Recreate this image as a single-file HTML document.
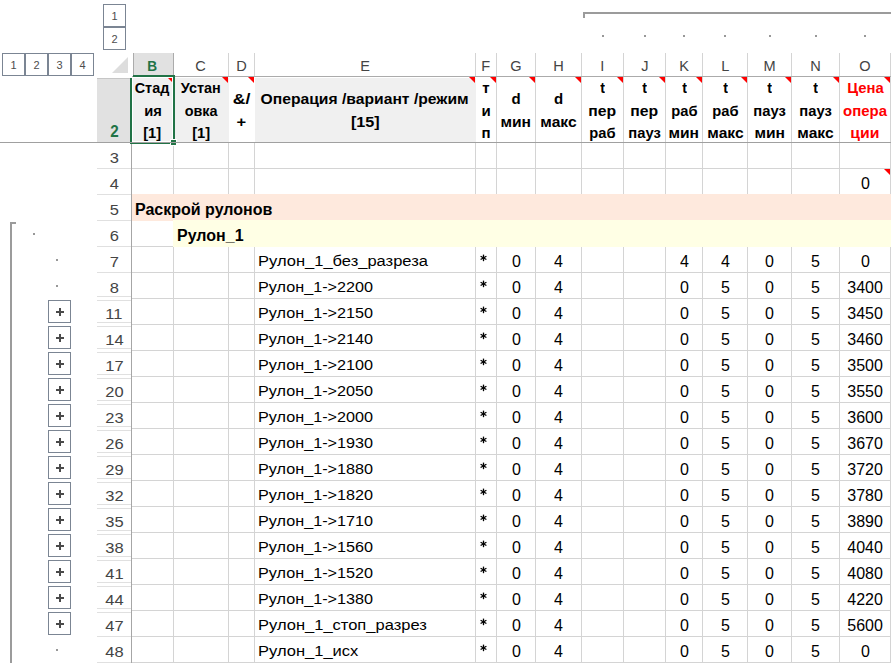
<!DOCTYPE html>
<html><head><meta charset="utf-8"><title>sheet</title>
<style>
html,body{margin:0;padding:0;background:#fff;}
body{width:891px;height:663px;position:relative;overflow:hidden;font-family:"Liberation Sans",sans-serif;}
div,span{position:absolute;box-sizing:border-box;}
.lb{width:23px;height:23px;border:1px solid #7b8593;background:#fff;color:#4d4d4d;font-size:11px;line-height:23px;text-align:center;}
.pb{width:23px;height:23px;border:1px solid #7b8593;background:#fff;left:48px;}
.pb i{position:absolute;background:#4a4a4a;display:block;}
.pb i.h{left:7px;top:10px;width:8px;height:2px;}
.pb i.v{left:10px;top:7px;width:2px;height:8px;}
.dot{width:2px;height:2px;background:#989898;}
.ch{top:53px;height:22px;line-height:25.9px;text-align:center;color:#444;font-size:15.5px;}
.ch b{display:inline-block;font-weight:inherit;transform:scaleX(0.94);}
.rh{left:97px;width:34px;text-align:center;color:#444;font-size:15.25px;height:25px;line-height:29.5px;}
.rh b{display:inline-block;font-weight:inherit;transform:scaleX(1.08);}
.vl{width:1px;background:#d4d4d4;}
.hl{height:1px;background:#d4d4d4;}
.c{height:25px;line-height:28px;font-size:15.5px;color:#000;white-space:nowrap;}
.c b,.c u,.hd b{display:inline-block;font-weight:inherit;text-decoration:none;}
.c u{transform:scaleX(1.065);transform-origin:0 50%;}
.c u.ar{transform:scaleX(1.045);}
.c u.bb{transform:scaleX(1.0);font-size:16px;position:relative;top:0.5px;}
.c.n{font-size:16.25px;line-height:28.5px;padding-left:1px;}
.c b{transform:scaleX(0.985);transform-origin:50% 50%;}
.c.st{font-size:19.5px;line-height:31.5px;}
.c.st u{transform:none;}
.hd b{transform:scaleX(0.96);transform-origin:50% 50%;}
.n{text-align:center;}
.hd{top:77px;height:65px;font-weight:bold;font-size:15px;color:#000;text-align:center;line-height:22.5px;white-space:nowrap;}
.tri{width:0;height:0;border-top:6px solid #ff0000;border-left:6px solid transparent;}
</style></head><body>

<div class="lb" style="left:103px;top:4px">1</div><div class="lb" style="left:103px;top:27px">2</div>
<div class="lb" style="left:2px;top:53px">1</div>
<div class="lb" style="left:25px;top:53px">2</div>
<div class="lb" style="left:48px;top:53px">3</div>
<div class="lb" style="left:71px;top:53px">4</div>
<div style="left:583px;top:12px;width:308px;height:2px;background:#9b9b9b"></div>
<div style="left:583px;top:12px;width:2px;height:6px;background:#9b9b9b"></div>
<div class="dot" style="left:602px;top:35px"></div>
<div class="dot" style="left:644px;top:35px"></div>
<div class="dot" style="left:683px;top:35px"></div>
<div class="dot" style="left:724px;top:35px"></div>
<div class="dot" style="left:769px;top:35px"></div>
<div class="dot" style="left:815px;top:35px"></div>
<div class="dot" style="left:864px;top:35px"></div>
<div style="left:10px;top:222px;width:2px;height:441px;background:#9b9b9b"></div>
<div style="left:10px;top:222px;width:6px;height:2px;background:#9b9b9b"></div>
<div class="dot" style="left:33px;top:233px"></div>
<div class="dot" style="left:56px;top:259px"></div>
<div class="dot" style="left:56px;top:285px"></div>
<div class="dot" style="left:56px;top:649px"></div>
<div class="pb" style="top:300px"><i class="h"></i><i class="v"></i></div>
<div class="pb" style="top:326px"><i class="h"></i><i class="v"></i></div>
<div class="pb" style="top:352px"><i class="h"></i><i class="v"></i></div>
<div class="pb" style="top:378px"><i class="h"></i><i class="v"></i></div>
<div class="pb" style="top:404px"><i class="h"></i><i class="v"></i></div>
<div class="pb" style="top:430px"><i class="h"></i><i class="v"></i></div>
<div class="pb" style="top:456px"><i class="h"></i><i class="v"></i></div>
<div class="pb" style="top:482px"><i class="h"></i><i class="v"></i></div>
<div class="pb" style="top:508px"><i class="h"></i><i class="v"></i></div>
<div class="pb" style="top:534px"><i class="h"></i><i class="v"></i></div>
<div class="pb" style="top:560px"><i class="h"></i><i class="v"></i></div>
<div class="pb" style="top:586px"><i class="h"></i><i class="v"></i></div>
<div class="pb" style="top:612px"><i class="h"></i><i class="v"></i></div>
<svg style="position:absolute;left:112px;top:57px" width="17" height="17"><polygon points="16,0 16,16 0,16" fill="#dddddd"/></svg>
<div style="left:134px;top:53px;width:40px;height:22px;background:#e1e1e1"></div>
<div class="ch" style="left:132px;width:41px;color:#217346;font-weight:bold;font-size:14.5px;line-height:26.5px;"><b>B</b></div>
<div class="ch" style="left:174px;width:54px;"><b>C</b></div>
<div class="ch" style="left:229px;width:25px;"><b>D</b></div>
<div class="ch" style="left:255px;width:220px;"><b>E</b></div>
<div class="ch" style="left:476px;width:20px;"><b>F</b></div>
<div class="ch" style="left:497px;width:38px;"><b>G</b></div>
<div class="ch" style="left:536px;width:45px;"><b>H</b></div>
<div class="ch" style="left:582px;width:41px;"><b>I</b></div>
<div class="ch" style="left:624px;width:41px;"><b>J</b></div>
<div class="ch" style="left:666px;width:36px;"><b>K</b></div>
<div class="ch" style="left:703px;width:44px;"><b>L</b></div>
<div class="ch" style="left:748px;width:43px;"><b>M</b></div>
<div class="ch" style="left:792px;width:47px;"><b>N</b></div>
<div class="ch" style="left:840px;width:50px;"><b>O</b></div>
<div class="vl" style="left:133px;top:53px;height:23px;background:#ababab"></div>
<div class="vl" style="left:173px;top:53px;height:23px;background:#ababab"></div>
<div class="vl" style="left:228px;top:53px;height:23px;background:#d4d4d4"></div>
<div class="vl" style="left:254px;top:53px;height:23px;background:#d4d4d4"></div>
<div class="vl" style="left:475px;top:53px;height:23px;background:#d4d4d4"></div>
<div class="vl" style="left:496px;top:53px;height:23px;background:#d4d4d4"></div>
<div class="vl" style="left:535px;top:53px;height:23px;background:#d4d4d4"></div>
<div class="vl" style="left:581px;top:53px;height:23px;background:#d4d4d4"></div>
<div class="vl" style="left:623px;top:53px;height:23px;background:#d4d4d4"></div>
<div class="vl" style="left:665px;top:53px;height:23px;background:#d4d4d4"></div>
<div class="vl" style="left:702px;top:53px;height:23px;background:#d4d4d4"></div>
<div class="vl" style="left:747px;top:53px;height:23px;background:#d4d4d4"></div>
<div class="vl" style="left:791px;top:53px;height:23px;background:#d4d4d4"></div>
<div class="vl" style="left:839px;top:53px;height:23px;background:#d4d4d4"></div>
<div class="vl" style="left:890px;top:53px;height:23px;background:#d4d4d4"></div>
<div class="hl" style="left:132px;top:76px;width:759px;background:#ababab"></div>
<div style="left:97px;top:79px;width:33px;height:63px;background:#e1e1e1"></div>
<div style="left:97px;top:78px;width:33px;height:1px;background:#c6c6c6"></div>
<div class="rh" style="top:117px;color:#217346;font-weight:bold;font-size:15.7px;line-height:29.2px;"><b style="transform:scaleX(0.97)">2</b></div>
<div style="left:133px;top:78px;width:96px;height:64px;background:#f0f0f0"></div>
<div style="left:255px;top:78px;width:221px;height:64px;background:#f0f0f0"></div>
<div class="vl" style="left:496px;top:77px;height:65px"></div>
<div class="vl" style="left:535px;top:77px;height:65px"></div>
<div class="vl" style="left:581px;top:77px;height:65px"></div>
<div class="vl" style="left:623px;top:77px;height:65px"></div>
<div class="vl" style="left:665px;top:77px;height:65px"></div>
<div class="vl" style="left:702px;top:77px;height:65px"></div>
<div class="vl" style="left:747px;top:77px;height:65px"></div>
<div class="vl" style="left:791px;top:77px;height:65px"></div>
<div class="vl" style="left:839px;top:77px;height:65px"></div>
<div class="vl" style="left:890px;top:77px;height:65px"></div>
<div class="vl" style="left:131px;top:143px;height:520px;background:#a6a6a6"></div>
<div class="vl" style="left:173px;top:143px;height:520px"></div>
<div class="vl" style="left:228px;top:143px;height:520px"></div>
<div class="vl" style="left:254px;top:143px;height:520px"></div>
<div class="vl" style="left:475px;top:143px;height:520px"></div>
<div class="vl" style="left:496px;top:143px;height:520px"></div>
<div class="vl" style="left:535px;top:143px;height:520px"></div>
<div class="vl" style="left:581px;top:143px;height:520px"></div>
<div class="vl" style="left:623px;top:143px;height:520px"></div>
<div class="vl" style="left:665px;top:143px;height:520px"></div>
<div class="vl" style="left:702px;top:143px;height:520px"></div>
<div class="vl" style="left:747px;top:143px;height:520px"></div>
<div class="vl" style="left:791px;top:143px;height:520px"></div>
<div class="vl" style="left:839px;top:143px;height:520px"></div>
<div class="vl" style="left:890px;top:143px;height:520px"></div>
<div class="hl" style="left:132px;top:168px;width:759px"></div>
<div class="hl" style="left:97px;top:168px;width:34px;background:#e0e0e0"></div>
<div class="hl" style="left:132px;top:194px;width:759px"></div>
<div class="hl" style="left:97px;top:194px;width:34px;background:#e0e0e0"></div>
<div class="hl" style="left:132px;top:220px;width:759px"></div>
<div class="hl" style="left:97px;top:220px;width:34px;background:#e0e0e0"></div>
<div class="hl" style="left:132px;top:246px;width:759px"></div>
<div class="hl" style="left:97px;top:246px;width:34px;background:#e0e0e0"></div>
<div class="hl" style="left:132px;top:272px;width:759px"></div>
<div class="hl" style="left:97px;top:272px;width:34px;background:#e0e0e0"></div>
<div class="hl" style="left:132px;top:298px;width:759px"></div>
<div class="hl" style="left:97px;top:296px;width:34px;background:#e0e0e0"></div>
<div class="hl" style="left:97px;top:300px;width:34px;background:#e0e0e0"></div>
<div class="hl" style="left:132px;top:324px;width:759px"></div>
<div class="hl" style="left:97px;top:322px;width:34px;background:#e0e0e0"></div>
<div class="hl" style="left:97px;top:326px;width:34px;background:#e0e0e0"></div>
<div class="hl" style="left:132px;top:350px;width:759px"></div>
<div class="hl" style="left:97px;top:348px;width:34px;background:#e0e0e0"></div>
<div class="hl" style="left:97px;top:352px;width:34px;background:#e0e0e0"></div>
<div class="hl" style="left:132px;top:376px;width:759px"></div>
<div class="hl" style="left:97px;top:374px;width:34px;background:#e0e0e0"></div>
<div class="hl" style="left:97px;top:378px;width:34px;background:#e0e0e0"></div>
<div class="hl" style="left:132px;top:402px;width:759px"></div>
<div class="hl" style="left:97px;top:400px;width:34px;background:#e0e0e0"></div>
<div class="hl" style="left:97px;top:404px;width:34px;background:#e0e0e0"></div>
<div class="hl" style="left:132px;top:428px;width:759px"></div>
<div class="hl" style="left:97px;top:426px;width:34px;background:#e0e0e0"></div>
<div class="hl" style="left:97px;top:430px;width:34px;background:#e0e0e0"></div>
<div class="hl" style="left:132px;top:454px;width:759px"></div>
<div class="hl" style="left:97px;top:452px;width:34px;background:#e0e0e0"></div>
<div class="hl" style="left:97px;top:456px;width:34px;background:#e0e0e0"></div>
<div class="hl" style="left:132px;top:480px;width:759px"></div>
<div class="hl" style="left:97px;top:478px;width:34px;background:#e0e0e0"></div>
<div class="hl" style="left:97px;top:482px;width:34px;background:#e0e0e0"></div>
<div class="hl" style="left:132px;top:506px;width:759px"></div>
<div class="hl" style="left:97px;top:504px;width:34px;background:#e0e0e0"></div>
<div class="hl" style="left:97px;top:508px;width:34px;background:#e0e0e0"></div>
<div class="hl" style="left:132px;top:532px;width:759px"></div>
<div class="hl" style="left:97px;top:530px;width:34px;background:#e0e0e0"></div>
<div class="hl" style="left:97px;top:534px;width:34px;background:#e0e0e0"></div>
<div class="hl" style="left:132px;top:558px;width:759px"></div>
<div class="hl" style="left:97px;top:556px;width:34px;background:#e0e0e0"></div>
<div class="hl" style="left:97px;top:560px;width:34px;background:#e0e0e0"></div>
<div class="hl" style="left:132px;top:584px;width:759px"></div>
<div class="hl" style="left:97px;top:582px;width:34px;background:#e0e0e0"></div>
<div class="hl" style="left:97px;top:586px;width:34px;background:#e0e0e0"></div>
<div class="hl" style="left:132px;top:610px;width:759px"></div>
<div class="hl" style="left:97px;top:608px;width:34px;background:#e0e0e0"></div>
<div class="hl" style="left:97px;top:612px;width:34px;background:#e0e0e0"></div>
<div class="hl" style="left:132px;top:636px;width:759px"></div>
<div class="hl" style="left:97px;top:636px;width:34px;background:#e0e0e0"></div>
<div class="hl" style="left:132px;top:662px;width:759px"></div>
<div class="hl" style="left:97px;top:662px;width:34px;background:#e0e0e0"></div>
<div style="left:132px;top:194px;width:759px;height:27px;background:#fee9dd"></div>
<div style="left:173px;top:220px;width:718px;height:27px;background:#ffffe5"></div>
<div class="rh" style="top:143px"><b>3</b></div>
<div class="rh" style="top:169px"><b>4</b></div>
<div class="rh" style="top:195px"><b>5</b></div>
<div class="rh" style="top:221px"><b>6</b></div>
<div class="rh" style="top:247px"><b>7</b></div>
<div class="rh" style="top:273px"><b>8</b></div>
<div class="rh" style="top:299px"><b>11</b></div>
<div class="rh" style="top:325px"><b>14</b></div>
<div class="rh" style="top:351px"><b>17</b></div>
<div class="rh" style="top:377px"><b>20</b></div>
<div class="rh" style="top:403px"><b>23</b></div>
<div class="rh" style="top:429px"><b>26</b></div>
<div class="rh" style="top:455px"><b>29</b></div>
<div class="rh" style="top:481px"><b>32</b></div>
<div class="rh" style="top:507px"><b>35</b></div>
<div class="rh" style="top:533px"><b>38</b></div>
<div class="rh" style="top:559px"><b>41</b></div>
<div class="rh" style="top:585px"><b>44</b></div>
<div class="rh" style="top:611px"><b>47</b></div>
<div class="rh" style="top:637px"><b>48</b></div>
<div class="hl" style="left:0;top:142px;width:891px;background:#9b9b9b"></div>
<div class="hd" style="left:132px;width:41px;"><b style="transform:scaleX(0.96)">Стад</b><br><b style="transform:scaleX(0.98)">ия</b><br><b style="transform:scaleX(0.98)">[1]</b></div>
<div class="hd" style="left:174px;width:54px;"><b style="transform:scaleX(0.96)">Устан</b><br><b style="transform:scaleX(0.96)">овка</b><br><b style="transform:scaleX(0.98)">[1]</b></div>
<div class="hd" style="left:229px;width:25px;padding-top:11px;"><b style="transform:scaleX(1.18)">&amp;/</b><br><b style="transform:scaleX(1.1)">+</b></div>
<div class="hd" style="left:255px;width:220px;padding-top:11px;"><b style="transform:scaleX(1.045)">Операция /вариант /режим</b><br><b style="transform:scaleX(1.08)">[15]</b></div>
<div class="hd" style="left:476px;width:20px;"><b style="transform:scaleX(1.0)">т</b><br><b style="transform:scaleX(1.0)">и</b><br><b style="transform:scaleX(1.0)">п</b></div>
<div class="hd" style="left:497px;width:38px;padding-top:11px;"><b style="transform:scaleX(1.0)">d</b><br><b style="transform:scaleX(1.04)">мин</b></div>
<div class="hd" style="left:536px;width:45px;padding-top:11px;"><b style="transform:scaleX(1.0)">d</b><br><b style="transform:scaleX(1.04)">макс</b></div>
<div class="hd" style="left:582px;width:41px;"><b style="transform:scaleX(0.95)">t</b><br><b style="transform:scaleX(1.05)">пер</b><br><b style="transform:scaleX(0.98)">раб</b></div>
<div class="hd" style="left:624px;width:41px;"><b style="transform:scaleX(0.95)">t</b><br><b style="transform:scaleX(1.05)">пер</b><br><b style="transform:scaleX(0.985)">пауз</b></div>
<div class="hd" style="left:666px;width:36px;"><b style="transform:scaleX(0.95)">t</b><br><b style="transform:scaleX(0.98)">раб</b><br><b style="transform:scaleX(1.04)">мин</b></div>
<div class="hd" style="left:703px;width:44px;"><b style="transform:scaleX(0.95)">t</b><br><b style="transform:scaleX(0.98)">раб</b><br><b style="transform:scaleX(1.04)">макс</b></div>
<div class="hd" style="left:748px;width:43px;"><b style="transform:scaleX(0.95)">t</b><br><b style="transform:scaleX(0.985)">пауз</b><br><b style="transform:scaleX(1.04)">мин</b></div>
<div class="hd" style="left:792px;width:47px;"><b style="transform:scaleX(0.95)">t</b><br><b style="transform:scaleX(0.985)">пауз</b><br><b style="transform:scaleX(1.04)">макс</b></div>
<div class="hd" style="left:840px;width:50px;color:#ff0000;"><b style="transform:scaleX(0.99)">Цена</b><br><b style="transform:scaleX(0.995)">опера</b><br><b style="transform:scaleX(1.05)">ции</b></div>
<div class="tri" style="left:167px;top:77px"></div>
<div class="tri" style="left:222px;top:77px"></div>
<div class="tri" style="left:248px;top:77px"></div>
<div class="tri" style="left:469px;top:77px"></div>
<div class="tri" style="left:490px;top:77px"></div>
<div class="tri" style="left:529px;top:77px"></div>
<div class="tri" style="left:575px;top:77px"></div>
<div class="tri" style="left:617px;top:77px"></div>
<div class="tri" style="left:659px;top:77px"></div>
<div class="tri" style="left:696px;top:77px"></div>
<div class="tri" style="left:741px;top:77px"></div>
<div class="tri" style="left:785px;top:77px"></div>
<div class="tri" style="left:833px;top:77px"></div>
<div class="tri" style="left:884px;top:77px"></div>
<div class="tri" style="left:884px;top:169px"></div>
<div style="left:132px;top:77px;width:41px;height:65px;border:1px solid #fff;"></div>
<div style="left:133px;top:75px;width:42px;height:2px;background:#217346"></div>
<div style="left:130px;top:78px;width:2px;height:66px;background:#217346"></div>
<div style="left:173px;top:75px;width:2px;height:64px;background:#217346"></div>
<div style="left:130px;top:142px;width:40px;height:2px;background:#217346"></div>
<div style="left:170px;top:139px;width:7px;height:7px;background:#fff"></div>
<div style="left:171px;top:140px;width:5px;height:5px;background:#217346"></div>
<div class="hl" style="left:0;top:142px;width:891px;background:#a0a0a0"></div>
<div class="c n" style="left:840px;top:169px;width:50px;"><b>0</b></div>
<div class="c" style="left:135px;top:195px;font-weight:bold;"><u class="bb">Раскрой рулонов</u></div>
<div class="c" style="left:177px;top:221px;font-weight:bold;"><u class="bb">Рулон_1</u></div>
<div class="c" style="left:258px;top:247px;"><u>Рулон_1_без_разреза</u></div>
<svg style="position:absolute;left:479px;top:253px" width="9" height="10" viewBox="0 0 9 10"><g stroke="#000" stroke-width="1.3" stroke-linecap="butt"><line x1="4.5" y1="1.6" x2="4.5" y2="8.2"/><line x1="1.6" y1="3.25" x2="7.4" y2="6.55"/><line x1="1.6" y1="6.55" x2="7.4" y2="3.25"/></g></svg>
<div class="c n" style="left:497px;top:247px;width:38px;"><b>0</b></div>
<div class="c n" style="left:536px;top:247px;width:45px;"><b>4</b></div>
<div class="c n" style="left:666px;top:247px;width:36px;"><b>4</b></div>
<div class="c n" style="left:703px;top:247px;width:44px;"><b>4</b></div>
<div class="c n" style="left:748px;top:247px;width:43px;"><b>0</b></div>
<div class="c n" style="left:792px;top:247px;width:47px;"><b>5</b></div>
<div class="c n" style="left:840px;top:247px;width:50px;"><b>0</b></div>
<div class="c" style="left:258px;top:273px;"><u class="ar">Рулон_1-&gt;2200</u></div>
<svg style="position:absolute;left:479px;top:279px" width="9" height="10" viewBox="0 0 9 10"><g stroke="#000" stroke-width="1.3" stroke-linecap="butt"><line x1="4.5" y1="1.6" x2="4.5" y2="8.2"/><line x1="1.6" y1="3.25" x2="7.4" y2="6.55"/><line x1="1.6" y1="6.55" x2="7.4" y2="3.25"/></g></svg>
<div class="c n" style="left:497px;top:273px;width:38px;"><b>0</b></div>
<div class="c n" style="left:536px;top:273px;width:45px;"><b>4</b></div>
<div class="c n" style="left:666px;top:273px;width:36px;"><b>0</b></div>
<div class="c n" style="left:703px;top:273px;width:44px;"><b>5</b></div>
<div class="c n" style="left:748px;top:273px;width:43px;"><b>0</b></div>
<div class="c n" style="left:792px;top:273px;width:47px;"><b>5</b></div>
<div class="c n" style="left:840px;top:273px;width:50px;"><b>3400</b></div>
<div class="c" style="left:258px;top:299px;"><u class="ar">Рулон_1-&gt;2150</u></div>
<svg style="position:absolute;left:479px;top:305px" width="9" height="10" viewBox="0 0 9 10"><g stroke="#000" stroke-width="1.3" stroke-linecap="butt"><line x1="4.5" y1="1.6" x2="4.5" y2="8.2"/><line x1="1.6" y1="3.25" x2="7.4" y2="6.55"/><line x1="1.6" y1="6.55" x2="7.4" y2="3.25"/></g></svg>
<div class="c n" style="left:497px;top:299px;width:38px;"><b>0</b></div>
<div class="c n" style="left:536px;top:299px;width:45px;"><b>4</b></div>
<div class="c n" style="left:666px;top:299px;width:36px;"><b>0</b></div>
<div class="c n" style="left:703px;top:299px;width:44px;"><b>5</b></div>
<div class="c n" style="left:748px;top:299px;width:43px;"><b>0</b></div>
<div class="c n" style="left:792px;top:299px;width:47px;"><b>5</b></div>
<div class="c n" style="left:840px;top:299px;width:50px;"><b>3450</b></div>
<div class="c" style="left:258px;top:325px;"><u class="ar">Рулон_1-&gt;2140</u></div>
<svg style="position:absolute;left:479px;top:331px" width="9" height="10" viewBox="0 0 9 10"><g stroke="#000" stroke-width="1.3" stroke-linecap="butt"><line x1="4.5" y1="1.6" x2="4.5" y2="8.2"/><line x1="1.6" y1="3.25" x2="7.4" y2="6.55"/><line x1="1.6" y1="6.55" x2="7.4" y2="3.25"/></g></svg>
<div class="c n" style="left:497px;top:325px;width:38px;"><b>0</b></div>
<div class="c n" style="left:536px;top:325px;width:45px;"><b>4</b></div>
<div class="c n" style="left:666px;top:325px;width:36px;"><b>0</b></div>
<div class="c n" style="left:703px;top:325px;width:44px;"><b>5</b></div>
<div class="c n" style="left:748px;top:325px;width:43px;"><b>0</b></div>
<div class="c n" style="left:792px;top:325px;width:47px;"><b>5</b></div>
<div class="c n" style="left:840px;top:325px;width:50px;"><b>3460</b></div>
<div class="c" style="left:258px;top:351px;"><u class="ar">Рулон_1-&gt;2100</u></div>
<svg style="position:absolute;left:479px;top:357px" width="9" height="10" viewBox="0 0 9 10"><g stroke="#000" stroke-width="1.3" stroke-linecap="butt"><line x1="4.5" y1="1.6" x2="4.5" y2="8.2"/><line x1="1.6" y1="3.25" x2="7.4" y2="6.55"/><line x1="1.6" y1="6.55" x2="7.4" y2="3.25"/></g></svg>
<div class="c n" style="left:497px;top:351px;width:38px;"><b>0</b></div>
<div class="c n" style="left:536px;top:351px;width:45px;"><b>4</b></div>
<div class="c n" style="left:666px;top:351px;width:36px;"><b>0</b></div>
<div class="c n" style="left:703px;top:351px;width:44px;"><b>5</b></div>
<div class="c n" style="left:748px;top:351px;width:43px;"><b>0</b></div>
<div class="c n" style="left:792px;top:351px;width:47px;"><b>5</b></div>
<div class="c n" style="left:840px;top:351px;width:50px;"><b>3500</b></div>
<div class="c" style="left:258px;top:377px;"><u class="ar">Рулон_1-&gt;2050</u></div>
<svg style="position:absolute;left:479px;top:383px" width="9" height="10" viewBox="0 0 9 10"><g stroke="#000" stroke-width="1.3" stroke-linecap="butt"><line x1="4.5" y1="1.6" x2="4.5" y2="8.2"/><line x1="1.6" y1="3.25" x2="7.4" y2="6.55"/><line x1="1.6" y1="6.55" x2="7.4" y2="3.25"/></g></svg>
<div class="c n" style="left:497px;top:377px;width:38px;"><b>0</b></div>
<div class="c n" style="left:536px;top:377px;width:45px;"><b>4</b></div>
<div class="c n" style="left:666px;top:377px;width:36px;"><b>0</b></div>
<div class="c n" style="left:703px;top:377px;width:44px;"><b>5</b></div>
<div class="c n" style="left:748px;top:377px;width:43px;"><b>0</b></div>
<div class="c n" style="left:792px;top:377px;width:47px;"><b>5</b></div>
<div class="c n" style="left:840px;top:377px;width:50px;"><b>3550</b></div>
<div class="c" style="left:258px;top:403px;"><u class="ar">Рулон_1-&gt;2000</u></div>
<svg style="position:absolute;left:479px;top:409px" width="9" height="10" viewBox="0 0 9 10"><g stroke="#000" stroke-width="1.3" stroke-linecap="butt"><line x1="4.5" y1="1.6" x2="4.5" y2="8.2"/><line x1="1.6" y1="3.25" x2="7.4" y2="6.55"/><line x1="1.6" y1="6.55" x2="7.4" y2="3.25"/></g></svg>
<div class="c n" style="left:497px;top:403px;width:38px;"><b>0</b></div>
<div class="c n" style="left:536px;top:403px;width:45px;"><b>4</b></div>
<div class="c n" style="left:666px;top:403px;width:36px;"><b>0</b></div>
<div class="c n" style="left:703px;top:403px;width:44px;"><b>5</b></div>
<div class="c n" style="left:748px;top:403px;width:43px;"><b>0</b></div>
<div class="c n" style="left:792px;top:403px;width:47px;"><b>5</b></div>
<div class="c n" style="left:840px;top:403px;width:50px;"><b>3600</b></div>
<div class="c" style="left:258px;top:429px;"><u class="ar">Рулон_1-&gt;1930</u></div>
<svg style="position:absolute;left:479px;top:435px" width="9" height="10" viewBox="0 0 9 10"><g stroke="#000" stroke-width="1.3" stroke-linecap="butt"><line x1="4.5" y1="1.6" x2="4.5" y2="8.2"/><line x1="1.6" y1="3.25" x2="7.4" y2="6.55"/><line x1="1.6" y1="6.55" x2="7.4" y2="3.25"/></g></svg>
<div class="c n" style="left:497px;top:429px;width:38px;"><b>0</b></div>
<div class="c n" style="left:536px;top:429px;width:45px;"><b>4</b></div>
<div class="c n" style="left:666px;top:429px;width:36px;"><b>0</b></div>
<div class="c n" style="left:703px;top:429px;width:44px;"><b>5</b></div>
<div class="c n" style="left:748px;top:429px;width:43px;"><b>0</b></div>
<div class="c n" style="left:792px;top:429px;width:47px;"><b>5</b></div>
<div class="c n" style="left:840px;top:429px;width:50px;"><b>3670</b></div>
<div class="c" style="left:258px;top:455px;"><u class="ar">Рулон_1-&gt;1880</u></div>
<svg style="position:absolute;left:479px;top:461px" width="9" height="10" viewBox="0 0 9 10"><g stroke="#000" stroke-width="1.3" stroke-linecap="butt"><line x1="4.5" y1="1.6" x2="4.5" y2="8.2"/><line x1="1.6" y1="3.25" x2="7.4" y2="6.55"/><line x1="1.6" y1="6.55" x2="7.4" y2="3.25"/></g></svg>
<div class="c n" style="left:497px;top:455px;width:38px;"><b>0</b></div>
<div class="c n" style="left:536px;top:455px;width:45px;"><b>4</b></div>
<div class="c n" style="left:666px;top:455px;width:36px;"><b>0</b></div>
<div class="c n" style="left:703px;top:455px;width:44px;"><b>5</b></div>
<div class="c n" style="left:748px;top:455px;width:43px;"><b>0</b></div>
<div class="c n" style="left:792px;top:455px;width:47px;"><b>5</b></div>
<div class="c n" style="left:840px;top:455px;width:50px;"><b>3720</b></div>
<div class="c" style="left:258px;top:481px;"><u class="ar">Рулон_1-&gt;1820</u></div>
<svg style="position:absolute;left:479px;top:487px" width="9" height="10" viewBox="0 0 9 10"><g stroke="#000" stroke-width="1.3" stroke-linecap="butt"><line x1="4.5" y1="1.6" x2="4.5" y2="8.2"/><line x1="1.6" y1="3.25" x2="7.4" y2="6.55"/><line x1="1.6" y1="6.55" x2="7.4" y2="3.25"/></g></svg>
<div class="c n" style="left:497px;top:481px;width:38px;"><b>0</b></div>
<div class="c n" style="left:536px;top:481px;width:45px;"><b>4</b></div>
<div class="c n" style="left:666px;top:481px;width:36px;"><b>0</b></div>
<div class="c n" style="left:703px;top:481px;width:44px;"><b>5</b></div>
<div class="c n" style="left:748px;top:481px;width:43px;"><b>0</b></div>
<div class="c n" style="left:792px;top:481px;width:47px;"><b>5</b></div>
<div class="c n" style="left:840px;top:481px;width:50px;"><b>3780</b></div>
<div class="c" style="left:258px;top:507px;"><u class="ar">Рулон_1-&gt;1710</u></div>
<svg style="position:absolute;left:479px;top:513px" width="9" height="10" viewBox="0 0 9 10"><g stroke="#000" stroke-width="1.3" stroke-linecap="butt"><line x1="4.5" y1="1.6" x2="4.5" y2="8.2"/><line x1="1.6" y1="3.25" x2="7.4" y2="6.55"/><line x1="1.6" y1="6.55" x2="7.4" y2="3.25"/></g></svg>
<div class="c n" style="left:497px;top:507px;width:38px;"><b>0</b></div>
<div class="c n" style="left:536px;top:507px;width:45px;"><b>4</b></div>
<div class="c n" style="left:666px;top:507px;width:36px;"><b>0</b></div>
<div class="c n" style="left:703px;top:507px;width:44px;"><b>5</b></div>
<div class="c n" style="left:748px;top:507px;width:43px;"><b>0</b></div>
<div class="c n" style="left:792px;top:507px;width:47px;"><b>5</b></div>
<div class="c n" style="left:840px;top:507px;width:50px;"><b>3890</b></div>
<div class="c" style="left:258px;top:533px;"><u class="ar">Рулон_1-&gt;1560</u></div>
<svg style="position:absolute;left:479px;top:539px" width="9" height="10" viewBox="0 0 9 10"><g stroke="#000" stroke-width="1.3" stroke-linecap="butt"><line x1="4.5" y1="1.6" x2="4.5" y2="8.2"/><line x1="1.6" y1="3.25" x2="7.4" y2="6.55"/><line x1="1.6" y1="6.55" x2="7.4" y2="3.25"/></g></svg>
<div class="c n" style="left:497px;top:533px;width:38px;"><b>0</b></div>
<div class="c n" style="left:536px;top:533px;width:45px;"><b>4</b></div>
<div class="c n" style="left:666px;top:533px;width:36px;"><b>0</b></div>
<div class="c n" style="left:703px;top:533px;width:44px;"><b>5</b></div>
<div class="c n" style="left:748px;top:533px;width:43px;"><b>0</b></div>
<div class="c n" style="left:792px;top:533px;width:47px;"><b>5</b></div>
<div class="c n" style="left:840px;top:533px;width:50px;"><b>4040</b></div>
<div class="c" style="left:258px;top:559px;"><u class="ar">Рулон_1-&gt;1520</u></div>
<svg style="position:absolute;left:479px;top:565px" width="9" height="10" viewBox="0 0 9 10"><g stroke="#000" stroke-width="1.3" stroke-linecap="butt"><line x1="4.5" y1="1.6" x2="4.5" y2="8.2"/><line x1="1.6" y1="3.25" x2="7.4" y2="6.55"/><line x1="1.6" y1="6.55" x2="7.4" y2="3.25"/></g></svg>
<div class="c n" style="left:497px;top:559px;width:38px;"><b>0</b></div>
<div class="c n" style="left:536px;top:559px;width:45px;"><b>4</b></div>
<div class="c n" style="left:666px;top:559px;width:36px;"><b>0</b></div>
<div class="c n" style="left:703px;top:559px;width:44px;"><b>5</b></div>
<div class="c n" style="left:748px;top:559px;width:43px;"><b>0</b></div>
<div class="c n" style="left:792px;top:559px;width:47px;"><b>5</b></div>
<div class="c n" style="left:840px;top:559px;width:50px;"><b>4080</b></div>
<div class="c" style="left:258px;top:585px;"><u class="ar">Рулон_1-&gt;1380</u></div>
<svg style="position:absolute;left:479px;top:591px" width="9" height="10" viewBox="0 0 9 10"><g stroke="#000" stroke-width="1.3" stroke-linecap="butt"><line x1="4.5" y1="1.6" x2="4.5" y2="8.2"/><line x1="1.6" y1="3.25" x2="7.4" y2="6.55"/><line x1="1.6" y1="6.55" x2="7.4" y2="3.25"/></g></svg>
<div class="c n" style="left:497px;top:585px;width:38px;"><b>0</b></div>
<div class="c n" style="left:536px;top:585px;width:45px;"><b>4</b></div>
<div class="c n" style="left:666px;top:585px;width:36px;"><b>0</b></div>
<div class="c n" style="left:703px;top:585px;width:44px;"><b>5</b></div>
<div class="c n" style="left:748px;top:585px;width:43px;"><b>0</b></div>
<div class="c n" style="left:792px;top:585px;width:47px;"><b>5</b></div>
<div class="c n" style="left:840px;top:585px;width:50px;"><b>4220</b></div>
<div class="c" style="left:258px;top:611px;"><u>Рулон_1_стоп_разрез</u></div>
<svg style="position:absolute;left:479px;top:617px" width="9" height="10" viewBox="0 0 9 10"><g stroke="#000" stroke-width="1.3" stroke-linecap="butt"><line x1="4.5" y1="1.6" x2="4.5" y2="8.2"/><line x1="1.6" y1="3.25" x2="7.4" y2="6.55"/><line x1="1.6" y1="6.55" x2="7.4" y2="3.25"/></g></svg>
<div class="c n" style="left:497px;top:611px;width:38px;"><b>0</b></div>
<div class="c n" style="left:536px;top:611px;width:45px;"><b>4</b></div>
<div class="c n" style="left:666px;top:611px;width:36px;"><b>0</b></div>
<div class="c n" style="left:703px;top:611px;width:44px;"><b>5</b></div>
<div class="c n" style="left:748px;top:611px;width:43px;"><b>0</b></div>
<div class="c n" style="left:792px;top:611px;width:47px;"><b>5</b></div>
<div class="c n" style="left:840px;top:611px;width:50px;"><b>5600</b></div>
<div class="c" style="left:258px;top:637px;"><u>Рулон_1_исх</u></div>
<svg style="position:absolute;left:479px;top:643px" width="9" height="10" viewBox="0 0 9 10"><g stroke="#000" stroke-width="1.3" stroke-linecap="butt"><line x1="4.5" y1="1.6" x2="4.5" y2="8.2"/><line x1="1.6" y1="3.25" x2="7.4" y2="6.55"/><line x1="1.6" y1="6.55" x2="7.4" y2="3.25"/></g></svg>
<div class="c n" style="left:497px;top:637px;width:38px;"><b>0</b></div>
<div class="c n" style="left:536px;top:637px;width:45px;"><b>4</b></div>
<div class="c n" style="left:666px;top:637px;width:36px;"><b>0</b></div>
<div class="c n" style="left:703px;top:637px;width:44px;"><b>5</b></div>
<div class="c n" style="left:748px;top:637px;width:43px;"><b>0</b></div>
<div class="c n" style="left:792px;top:637px;width:47px;"><b>5</b></div>
<div class="c n" style="left:840px;top:637px;width:50px;"><b>0</b></div>
</body></html>
